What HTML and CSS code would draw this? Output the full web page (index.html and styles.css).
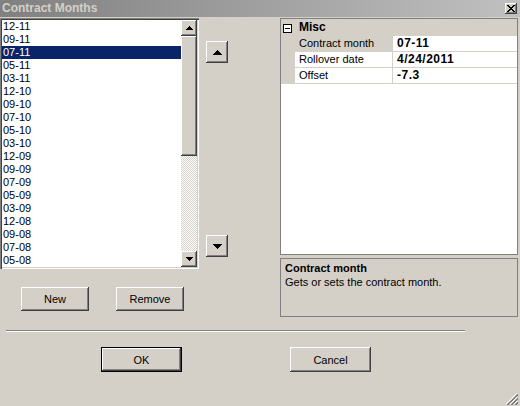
FILE: index.html
```html
<!DOCTYPE html>
<html>
<head>
<meta charset="utf-8">
<title>Contract Months</title>
<link rel="stylesheet" href="styles.css">
</head>
<body>
<div class="window">
  <div class="titlebar">
    <span class="title">Contract Months</span>
    <span class="close"><svg width="8" height="7" viewBox="0 0 8 7" shape-rendering="crispEdges"><path d="M0 0h2v1h1v1h2V1h1V0h2v1H7v1H6v1H5v1h1v1h1v1h1v1H6V6H5V5H3v1H2v1H0V6h1V5h1V4h1V3H2V2H1V1H0z" fill="#000"/></svg></span>
  </div>
  <div class="main">
    <div class="leftcol">
      <div class="listbox">
        <ul class="items">
          <li>12-11</li>
          <li>09-11</li>
          <li class="sel">07-11</li>
          <li>05-11</li>
          <li>03-11</li>
          <li>12-10</li>
          <li>09-10</li>
          <li>07-10</li>
          <li>05-10</li>
          <li>03-10</li>
          <li>12-09</li>
          <li>09-09</li>
          <li>07-09</li>
          <li>05-09</li>
          <li>03-09</li>
          <li>12-08</li>
          <li>09-08</li>
          <li>07-08</li>
          <li>05-08</li>
        </ul>
        <div class="vscroll">
          <div class="bevel sbtn"><svg width="7" height="4" viewBox="0 0 7 4" shape-rendering="crispEdges"><path d="M3 0h1v1h1v1h1v1h1v1H0V3h1V2h1V1h1z"/></svg></div>
          <div class="bevel thumb"></div>
          <div class="track"></div>
          <div class="bevel sbtn"><svg width="7" height="4" viewBox="0 0 7 4" shape-rendering="crispEdges"><path d="M0 0h7v1H6v1H5v1H4v1H3V3H2V2H1V1H0z"/></svg></div>
        </div>
      </div>
      <div class="listbuttons">
        <div class="bevel btn">New</div>
        <div class="bevel btn">Remove</div>
      </div>
    </div>
    <div class="movecol">
      <div class="bevel sq up"><svg width="9" height="5" viewBox="0 0 9 5" shape-rendering="crispEdges"><path d="M4 0h1v1h1v1h1v1h1v1h1v1H0V4h1V3h1V2h1V1h1z"/></svg></div>
      <div class="bevel sq down"><svg width="9" height="5" viewBox="0 0 9 5" shape-rendering="crispEdges"><path d="M0 0h9v1H8v1H7v1H6v1H5v1H4V4H3V3H2V2H1V1H0z"/></svg></div>
    </div>
    <div class="propcol">
      <div class="grid">
        <div class="cat">
          <span class="minus"></span>
          <span class="catname">Misc</span>
        </div>
        <div class="row">
          <span class="margin"></span>
          <span class="name selname">Contract month</span>
          <span class="value">07-11</span>
        </div>
        <div class="row">
          <span class="margin"></span>
          <span class="name">Rollover date</span>
          <span class="value">4/24/2011</span>
        </div>
        <div class="row">
          <span class="margin"></span>
          <span class="name">Offset</span>
          <span class="value">-7.3</span>
        </div>
      </div>
      <div class="help">
        <div class="helptitle">Contract month</div>
        <div class="helptext">Gets or sets the contract month.</div>
      </div>
    </div>
  </div>
  <div class="separator"></div>
  <div class="dialogbuttons">
    <div class="bevel btn wide default">OK</div>
    <div class="bevel btn wide">Cancel</div>
  </div>
  <div class="grip"><svg width="12" height="12" viewBox="0 0 12 12" shape-rendering="crispEdges"><path d="M11 0L0 11M11 4L4 11M11 8L8 11" stroke="#fff" stroke-width="1"/><path d="M12 1L1 12M12 2L2 12M12 5L5 12M12 6L6 12M12 9L9 12M12 10L10 12" stroke="#808080" stroke-width="1"/></svg></div>
</div>
</body>
</html>
```

FILE: styles.css
```css
* {
  box-sizing: border-box;
  margin: 0;
  padding: 0;
}

html, body {
  width: 520px;
  height: 406px;
  overflow: hidden;
}

body {
  background: #d4d0c8;
  font-family: "Liberation Sans", Arial, sans-serif;
  font-size: 11px;
  color: #000;
}

.window {
  position: relative;
  width: 520px;
  height: 406px;
  display: flex;
  flex-direction: column;
}

.titlebar {
  height: 17px;
  flex: none;
  background: linear-gradient(to right, #808080, #c0c0c0);
  display: flex;
  align-items: center;
  justify-content: space-between;
  padding: 0 3px 0 2px;
}

.title {
  font-weight: bold;
  font-size: 12px;
  color: #d4d0c8;
  line-height: 17px;
}

.close {
  width: 12px;
  height: 11px;
  background: #d4d0c8;
  box-shadow: inset -1px -1px #404040, inset 1px 1px #fff, inset -2px -2px #808080;
  display: flex;
  align-items: center;
  justify-content: center;
  padding-right: 1px;
  padding-bottom: 1px;
}

.bevel {
  background: #d4d0c8;
  box-shadow: inset -1px -1px #404040, inset 1px 1px #fff, inset -2px -2px #808080, inset 2px 2px #d4d0c8;
  display: flex;
  align-items: center;
  justify-content: center;
}

.main {
  display: flex;
  align-items: flex-start;
  margin-top: 1px;
  height: 299px;
  flex: none;
}

.leftcol {
  width: 199px;
  flex: none;
}

.listbox {
  display: flex;
  width: 199px;
  height: 251px;
  padding: 2px;
  background: #fff;
  box-shadow: inset 1px 1px #808080, inset 2px 2px #404040, inset -1px -1px #fff, inset -2px -2px #d4d0c8;
}

.items {
  list-style: none;
  flex: 1;
  overflow: hidden;
}

.items li {
  height: 13px;
  line-height: 13px;
  padding-left: 1px;
  white-space: nowrap;
}

.items li.sel {
  background: #0a246a;
  color: #fff;
}

.vscroll {
  width: 16px;
  flex: none;
  display: flex;
  flex-direction: column;
}

.sbtn {
  height: 16px;
  flex: none;
}

.thumb {
  height: 120px;
  flex: none;
}

.track {
  flex: 1;
  background: repeating-conic-gradient(#d4d0c8 0 25%, #fff 0 50%) 0 0 / 2px 2px;
}

.listbuttons {
  display: flex;
  gap: 27px;
  padding-left: 21px;
  margin-top: 18px;
}

.btn {
  width: 68px;
  height: 24px;
  font-size: 11px;
}

.movecol {
  margin-left: 7px;
  width: 22px;
  flex: none;
  display: flex;
  flex-direction: column;
}

.sq {
  width: 22px;
  height: 22px;
}

.sq.up {
  margin-top: 23px;
}

.sq.down {
  margin-top: 172px;
}

.propcol {
  margin-left: 52px;
  width: 238px;
  flex: none;
}

.grid {
  height: 237px;
  border: 1px solid #808080;
  background: #fff;
}

.cat {
  height: 17px;
  background: #d4d0c8;
  display: flex;
  align-items: center;
}

.minus {
  width: 9px;
  height: 9px;
  margin-left: 2px;
  border: 1px solid #000;
  background: #fff;
  position: relative;
  margin-top: 1px;
}

.minus::after {
  content: "";
  position: absolute;
  left: 1px;
  top: 3px;
  width: 5px;
  height: 1px;
  background: #000;
}

.catname {
  font-weight: bold;
  margin-left: 7px;
  line-height: 17px;
  font-size: 12px;
}

.row {
  display: flex;
  height: 16px;
  border-bottom: 1px solid #d4d0c8;
  line-height: 15px;
}

.margin {
  width: 14px;
  flex: none;
  background: #d4d0c8;
}

.name {
  width: 97px;
  flex: none;
  padding-left: 4px;
  white-space: nowrap;
  font-size: 11px;
}

.selname {
  background: #d4d0c8;
}

.value {
  flex: 1;
  border-left: 1px solid #d4d0c8;
  padding-left: 4px;
  font-weight: bold;
  font-size: 12px;
  letter-spacing: 0.5px;
}

.help {
  margin-top: 3px;
  height: 59px;
  border: 1px solid #808080;
  padding: 2px 4px;
}

.helptitle {
  font-weight: bold;
  line-height: 14px;
}

.helptext {
  line-height: 14px;
}

.separator {
  margin-top: 13px;
  margin-left: 6px;
  width: 459px;
  height: 2px;
  border-top: 1px solid #808080;
  border-bottom: 1px solid #fff;
  flex: none;
}

.dialogbuttons {
  display: flex;
  gap: 108px;
  padding-left: 101px;
  margin-top: 15px;
}

.wide {
  width: 81px;
  height: 25px;
}

.default {
  box-shadow: inset 0 0 0 1px #000, inset -2px -2px #404040, inset 2px 2px #fff, inset -3px -3px #808080, inset 3px 3px #d4d0c8;
}

.grip {
  position: absolute;
  right: 2px;
  bottom: 1px;
  width: 12px;
  height: 12px;
  display: flex;
}
```
